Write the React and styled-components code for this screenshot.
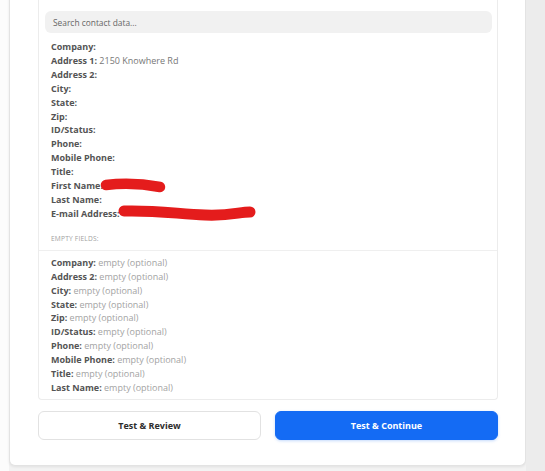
import styled, { createGlobalStyle } from "styled-components";

const GlobalStyle = createGlobalStyle`
  html, body {
    margin: 0;
    padding: 0;
    background: #f3f3f3;
  }
  body {
    font-family: "Open Sans", "Noto Sans", sans-serif;
  }
`;

const Page = styled.div`
  display: flex;
  height: 471px;
  overflow: hidden;
`;

const Gutter = styled.div`
  width: 9px;
  flex: none;
  background: #fcfcfc;
`;

const Main = styled.div`
  width: 517px;
  flex: none;
`;

const Scrollbar = styled.div`
  flex: 1;
  background: #ececec;
`;

const Card = styled.div`
  margin-top: -20px;
  height: 486px;
  box-sizing: border-box;
  background: #fff;
  border: 1px solid #e3e3e3;
  border-top: none;
  border-radius: 0 0 6px 6px;
  box-shadow: 0 1px 3px rgba(0, 0, 0, 0.08);
  padding: 0 27px 0 28px;
  display: flex;
  flex-direction: column;
`;

const Panel = styled.div`
  border: 1px solid #ececec;
  border-top: none;
  border-radius: 0 0 4px 4px;
  padding-top: 31px;
`;

const SearchBox = styled.div`
  margin: 0 5px 0 6px;
  height: 22px;
  border-radius: 6px;
  background: #f1f1f1;
  display: flex;
  align-items: center;
  padding-left: 8px;
  font-size: 8.4px;
  color: #666;
`;

const FieldList = styled.div`
  padding: ${(p) => p.$top}px 12px ${(p) => p.$bottom}px;
`;

const Row = styled.div`
  position: relative;
  font-size: 9px;
  line-height: 13.9px;
  white-space: nowrap;
  color: #555;
`;

const Label = styled.span`
  font-weight: 700;
  color: #545454;
`;

const Value = styled.span`
  color: ${(p) => (p.$muted ? "#a3a3a3" : "#777")};
`;

const Redaction = styled.svg`
  position: absolute;
  top: ${(p) => p.$top}px;
  left: ${(p) => p.$left}px;
  overflow: visible;
`;

const SectionTitle = styled.div`
  padding: 13px 12px 6px;
  line-height: 10px;
  font-size: 6.6px;
  letter-spacing: 0.2px;
  color: #a0a0a0;
  text-transform: uppercase;
  border-bottom: 1px solid #efefef;
`;

const Actions = styled.div`
  display: grid;
  grid-template-columns: 1fr 1fr;
  gap: 14px;
  margin-top: 11px;
`;

const Button = styled.button`
  height: 29px;
  border-radius: 6px;
  font-family: inherit;
  font-size: 9px;
  font-weight: 700;
  cursor: pointer;
  border: 1px solid ${(p) => (p.$primary ? "#146bf4" : "#e2e2e2")};
  background: ${(p) => (p.$primary ? "#146bf4" : "#fff")};
  color: ${(p) => (p.$primary ? "#fff" : "#2d2d2d")};
  box-shadow: ${(p) => (p.$primary ? "0 1px 3px rgba(20,107,244,0.25)" : "none")};
`;

const filled = [
  ["Company:", ""],
  ["Address 1:", "2150 Knowhere Rd"],
  ["Address 2:", ""],
  ["City:", ""],
  ["State:", ""],
  ["Zip:", ""],
  ["ID/Status:", ""],
  ["Phone:", ""],
  ["Mobile Phone:", ""],
  ["Title:", ""],
  ["First Name:", "", "short"],
  ["Last Name:", ""],
  ["E-mail Address:", "", "long"],
];

const empty = [
  "Company:",
  "Address 2:",
  "City:",
  "State:",
  "Zip:",
  "ID/Status:",
  "Phone:",
  "Mobile Phone:",
  "Title:",
  "Last Name:",
];

const Scribble = ({ kind }) =>
  kind === "short" ? (
    <Redaction $left={49} $top={0} width="66" height="14">
      <path
        d="M6 6 C 22 4, 44 5, 60 8"
        fill="none"
        stroke="#e41c1c"
        strokeWidth="10.5"
        strokeLinecap="round"
      />
    </Redaction>
  ) : (
    <Redaction $left={66} $top={-4} width="140" height="18">
      <path
        d="M7 8 C 38 7, 62 11, 88 12 S 122 9, 133 9"
        fill="none"
        stroke="#e41c1c"
        strokeWidth="11"
        strokeLinecap="round"
      />
    </Redaction>
  );

const App = () => {
  return (
    <>
      <GlobalStyle />
      <Page>
        <Gutter />
        <Main>
          <Card>
            <Panel>
              <SearchBox>Search contact data...</SearchBox>
              <FieldList $top={7} $bottom={0}>
                {filled.map(([label, value, mark]) => (
                  <Row key={label}>
                    <Label>{label}</Label>
                    {value && <Value> {value}</Value>}
                    {mark && <Scribble kind={mark} />}
                  </Row>
                ))}
              </FieldList>
              <SectionTitle>Empty fields:</SectionTitle>
              <FieldList $top={5} $bottom={4}>
                {empty.map((label) => (
                  <Row key={label}>
                    <Label>{label}</Label>
                    <Value $muted> empty (optional)</Value>
                  </Row>
                ))}
              </FieldList>
            </Panel>
            <Actions>
              <Button>Test &amp; Review</Button>
              <Button $primary>Test &amp; Continue</Button>
            </Actions>
          </Card>
        </Main>
        <Scrollbar />
      </Page>
    </>
  );
};

export default App;
